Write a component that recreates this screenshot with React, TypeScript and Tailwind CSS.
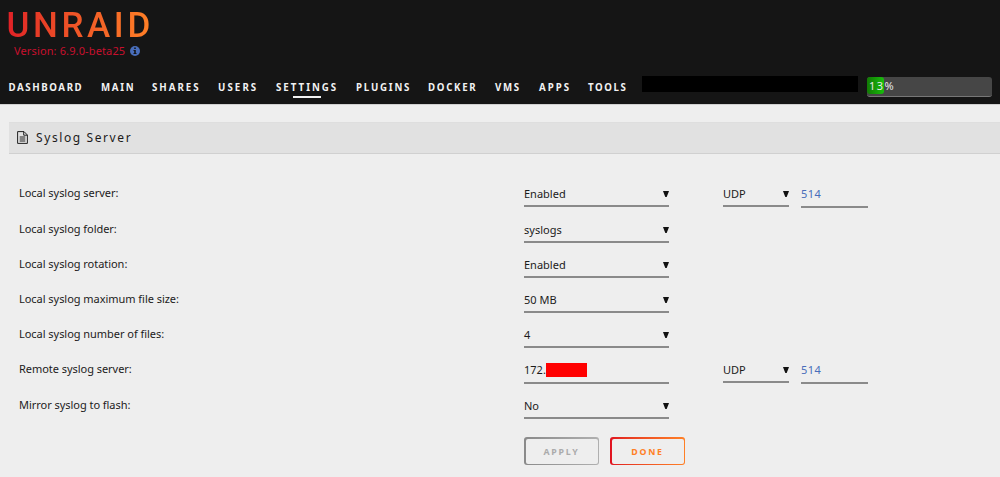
import React from 'react';
import clsx from 'clsx';

const navItems = [
  { label: 'DASHBOARD', width: 'w-[92.5px]', tracking: 'tracking-[1.6px]' },
  { label: 'MAIN', width: 'w-[51px]', tracking: 'tracking-[1.7px]' },
  { label: 'SHARES', width: 'w-[66px]', tracking: 'tracking-[2px]' },
  { label: 'USERS', width: 'w-[58px]', tracking: 'tracking-[2.1px]' },
  { label: 'SETTINGS', width: 'w-[80px]', tracking: 'tracking-[2px]', active: true },
  { label: 'PLUGINS', width: 'w-[72px]', tracking: 'tracking-[1.8px]' },
  { label: 'DOCKER', width: 'w-[67px]', tracking: 'tracking-[1.7px]' },
  { label: 'VMS', width: 'w-[44px]', tracking: 'tracking-[1.6px]' },
  { label: 'APPS', width: 'w-[49px]', tracking: 'tracking-[2px]' },
  { label: 'TOOLS', width: 'w-[54px]', tracking: 'tracking-[1.6px]' },
];

const rows = [
  { label: 'Local syslog server:', value: 'Enabled', height: 'h-[36px]', port: '514' },
  { label: 'Local syslog folder:', value: 'syslogs', height: 'h-[35px]' },
  { label: 'Local syslog rotation:', value: 'Enabled', height: 'h-[35px]' },
  { label: 'Local syslog maximum file size:', value: '50 MB', height: 'h-[35px]' },
  { label: 'Local syslog number of files:', value: '4', height: 'h-[35px]' },
  { label: 'Remote syslog server:', value: '172.', height: 'h-[36px]', port: '514', redacted: true },
  { label: 'Mirror syslog to flash:', value: 'No', height: 'h-[35px]' },
];

function Arrow() {
  return (
    <svg className="mt-[6px] h-[6px] w-[6px]" viewBox="0 0 6 6">
      <path d="M0 0H6L3.7 6H2.3Z" fill="#111" />
    </svg>
  );
}

function Select({ value, className }: { value: string; className: string }) {
  return (
    <div className={clsx('flex h-[22px] justify-between border-b-2 border-[#8a8a8a] leading-[18px]', className)}>
      <span>{value}</span>
      <Arrow />
    </div>
  );
}

export default function App() {
  return (
    <div className="h-[477px] w-[1000px] overflow-hidden bg-[#eeeeee] font-['Noto_Sans',sans-serif] text-[11px] text-[#1c1b1b]">
      <header className="h-[105px] border-b border-[#d0d0d0] bg-[#151515]">
        <div className="h-[43px] pl-[6.5px] pt-[10px]">
          <div className="w-[145px] whitespace-nowrap bg-gradient-to-r from-[#e01f26] to-[#ff8026] bg-clip-text font-['Roboto',sans-serif] text-[35px] font-medium leading-[31px] tracking-[3.6px] text-transparent">
            UNRAID
          </div>
        </div>
        <div className="flex h-[16px] items-center gap-[5px] pl-[14px] text-[#c8102e]">
          <span className="tracking-[0.13px]">Version: 6.9.0-beta25</span>
          <svg className="h-[10px] w-[10px]" viewBox="0 0 10 10">
            <circle cx="5" cy="5" r="5" fill="#486dba" />
            <path d="M4.2 1.5H5.8V3H4.2ZM3.5 4H5.8V7H6.5V8H3.5V7H4.2V5H3.5Z" fill="#151515" />
          </svg>
        </div>
        <div className="flex h-[43px] pl-[8.5px] pt-[17px]">
          <nav className="flex w-[633.5px] text-[9.7px] font-bold leading-[24px] text-[#f2f2f2]">
            {navItems.map((item) => (
              <a key={item.label} className={clsx('relative block shrink-0', item.width, item.tracking)}>
                {item.label}
                {item.active && <span className="absolute left-[17px] top-[20px] h-[2px] w-[28px] bg-[#f2f2f2]" />}
              </a>
            ))}
          </nav>
          <div className="h-[16px] w-[216px] bg-black" />
          <div className="ml-[9px] mt-px flex h-[20px] w-[125px] rounded-[3px] border-b border-[#777] bg-[#464646]">
            <div className="relative h-[17px] w-[17px] rounded-[3px] bg-gradient-to-r from-[#127a05] to-[#17bf0b]">
              <span className="absolute left-[2px] top-0 whitespace-nowrap text-[11px] leading-[18px] tracking-[1.5px] text-[#e8e8e8]">13%</span>
            </div>
          </div>
        </div>
      </header>

      <main>
        <div className="ml-[9px] mt-[17px] flex h-[32px] items-center border-b border-t border-b-[#d0d0d0] border-t-[#dedede] bg-[#e1e1e1] pl-[8px]">
          <svg className="mb-px h-[13px] w-[11px]" viewBox="0 0 11 13" fill="none" stroke="#222">
            <path d="M0.6 0.6H7L10.4 4V12.4H0.6ZM6.7 0.8V4.2H10.2M2.7 6H8.3M2.7 8H8.3M2.7 10H8.3" />
          </svg>
          <span className="ml-[8px] text-[12px] tracking-[1.6px]">Syslog Server</span>
        </div>

        <div className="pl-[19px] pt-[31px]">
          {rows.map((row) => (
            <div key={row.label} className={clsx('flex', row.height)}>
              <div className="w-[505px] leading-[16px] tracking-[-0.04px]">{row.label}</div>
              {row.redacted ? (
                <div className="flex h-[23px] w-[145px] border-b-2 border-[#8a8a8a] leading-[18px]">
                  <span className="w-[22px]">{row.value}</span>
                  <span className="mt-[2px] h-[14px] w-[41px] bg-[#ff0000]" />
                </div>
              ) : (
                <Select value={row.value} className="w-[145px]" />
              )}
              {row.port && (
                <>
                  <Select value="UDP" className="ml-[54px] w-[66px]" />
                  <div className="ml-[12px] h-[23px] w-[67px] border-b-2 border-[#8a8a8a] leading-[18px] tracking-[0.5px] text-[#486dba]">
                    {row.port}
                  </div>
                </>
              )}
            </div>
          ))}
        </div>

        <div className="flex gap-[11px] pl-[524px] pt-[5px] text-[8.8px] font-bold tracking-[1.8px]">
          <button className="h-[28px] w-[75px] rounded-[3px] bg-gradient-to-r from-[#8a8a8a] to-[#b0b0b0] p-[1.5px] text-[#ababab]">
            <span className="flex h-full items-center justify-center rounded-[2px] bg-[#eeeeee] pt-[3px]">APPLY</span>
          </button>
          <button className="h-[28px] w-[75px] rounded-[3px] bg-gradient-to-r from-[#e01020] to-[#ff8026] p-[1.5px] text-[#ff8026]">
            <span className="flex h-full items-center justify-center rounded-[2px] bg-[#eeeeee] pt-[3px]">DONE</span>
          </button>
        </div>
      </main>
    </div>
  );
}
